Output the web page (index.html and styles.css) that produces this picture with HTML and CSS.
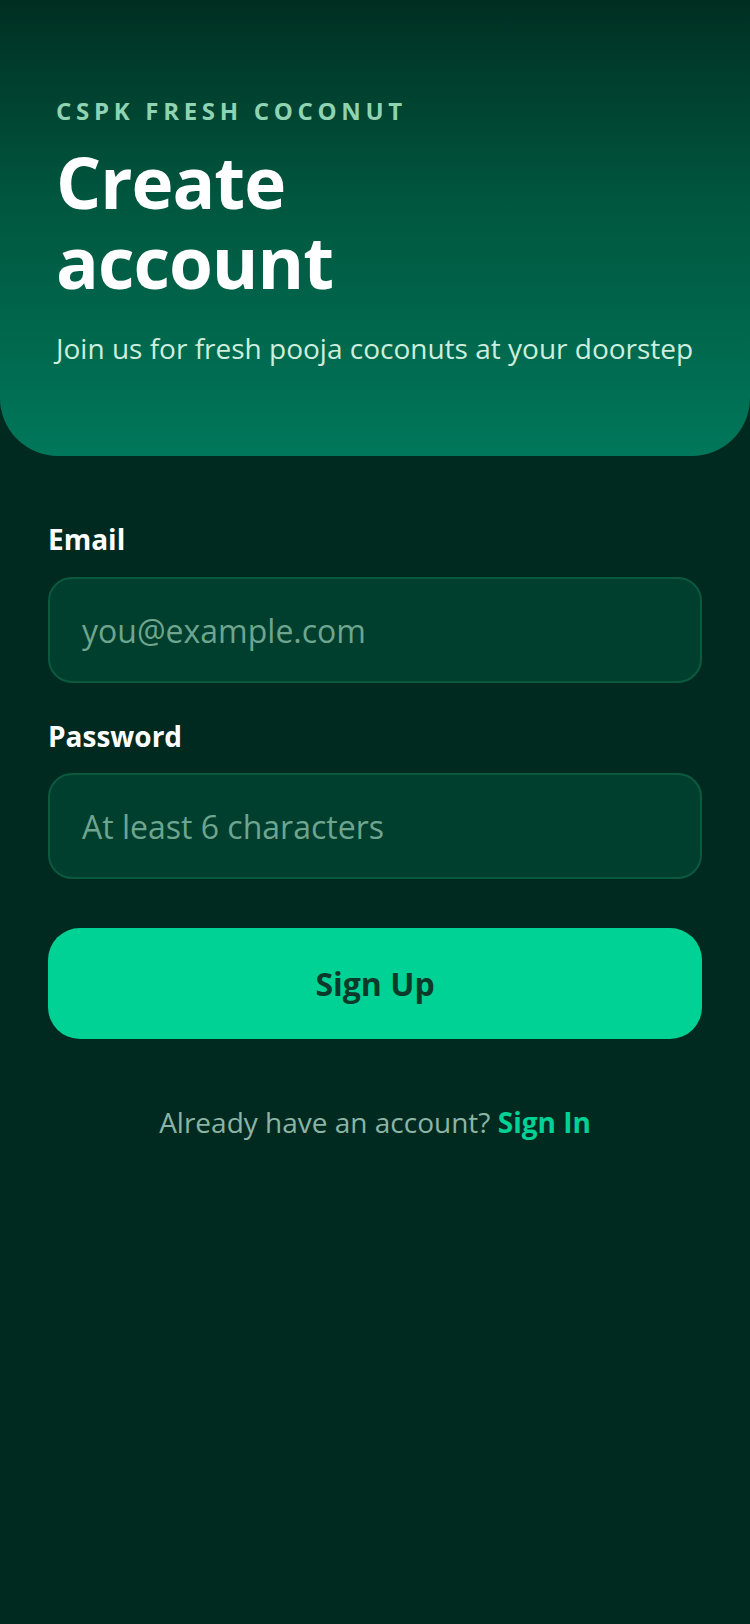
FILE: index.html
```html
<!DOCTYPE html>
<html lang="en">
<head>
<meta charset="utf-8">
<title>Create account</title>
<link rel="stylesheet" href="styles.css">
</head>
<body>
<div class="screen">
  <header class="hero">
    <div class="brand">CSPK FRESH COCONUT</div>
    <h1 class="title"><span class="title-line">Create</span><span class="title-line">account</span></h1>
    <p class="subtitle">Join us for fresh pooja coconuts at your doorstep</p>
  </header>
  <form class="form">
    <div class="field">
      <label class="label" for="email">Email</label>
      <input class="input" id="email" type="email" placeholder="you@example.com">
    </div>
    <div class="field">
      <label class="label" for="password">Password</label>
      <input class="input" id="password" type="password" placeholder="At least 6 characters">
    </div>
    <button class="btn" type="button">Sign Up</button>
    <p class="switch">Already have an account? <a class="link" href="#">Sign In</a></p>
  </form>
</div>
</body>
</html>
```
FILE: styles.css
```css
* { box-sizing: border-box; }
html, body {
  margin: 0;
  padding: 0;
  background: #002a20;
}
body {
  font-family: "Open Sans", "Noto Sans", sans-serif;
  width: 750px;
  min-height: 1624px;
}
.screen {
  min-height: 1624px;
  background: #002a20;
}
.hero {
  height: 456px;
  padding: 95px 56px 0 56px;
  background: linear-gradient(180deg, #002f22 0%, #00573f 45%, #00775a 100%);
  border-radius: 0 0 58px 58px;
}
.brand {
  font-size: 24px;
  line-height: 32px;
  font-weight: 700;
  letter-spacing: 4.7px;
  color: #8fd4b2;
}
.title {
  margin: 15px 0 0 0;
  display: flex;
  flex-direction: column;
  font-size: 71px;
  font-weight: 700;
  color: #ffffff;
  letter-spacing: -1px;
}
.title-line {
  display: block;
  height: 80px;
  line-height: 80px;
}
.subtitle {
  margin: 26px 0 0 0;
  font-size: 28px;
  line-height: 40px;
  color: #cdeedd;
  white-space: nowrap;
}
.form {
  padding: 62px 48px 0 48px;
  display: flex;
  flex-direction: column;
}
.field {
  display: flex;
  flex-direction: column;
  margin-bottom: 32px;
}
.field + .field { margin-bottom: 49px; }
.label {
  font-size: 28px;
  line-height: 42px;
  font-weight: 700;
  color: #ffffff;
  margin-bottom: 16px;
}
.field:first-child .label { margin-bottom: 17px; }
.input {
  height: 106px;
  width: 100%;
  border: 2px solid #0b5a40;
  border-radius: 24px;
  background: #003e2e;
  padding: 0 32px;
  font-family: "Open Sans", "Noto Sans", sans-serif;
  font-size: 32px;
  color: #ffffff;
  outline: none;
}
.input::placeholder {
  color: #6ea58f;
}
.btn {
  height: 111px;
  width: 100%;
  border: 0;
  border-radius: 32px;
  background: #00d194;
  color: #0b3a2b;
  font-family: "Open Sans", "Noto Sans", sans-serif;
  font-size: 32px;
  font-weight: 700;
}
.switch {
  margin: 63px 0 0 0;
  text-align: center;
  font-size: 28px;
  line-height: 40px;
  color: #8cb4a5;
}
.link {
  color: #00d194;
  font-weight: 700;
  text-decoration: none;
}
```
